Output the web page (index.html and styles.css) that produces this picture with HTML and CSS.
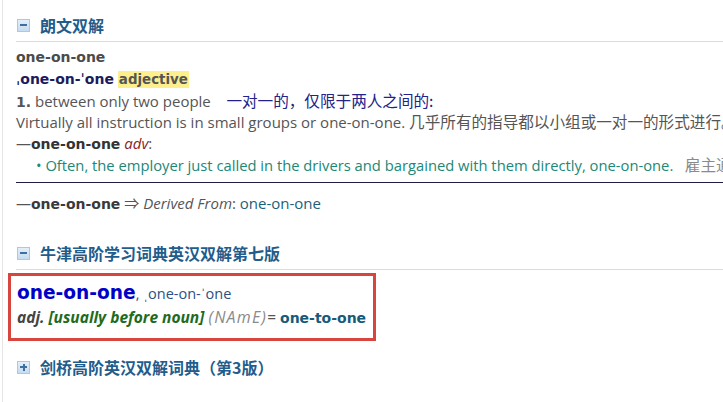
FILE: index.html
```html
<!DOCTYPE html>
<html lang="zh">
<head>
  <meta charset="UTF-8" />
  <title>one-on-one</title>
  <link rel="stylesheet" href="styles.css">
</head>
<body>
<div class="page">

  <!-- Longman -->
  <section class="dict">
    <div class="dict-head">
      <span class="toggle minus"></span>
      <h2>朗文双解</h2>
    </div>
    <div class="entry">
      <div class="hw">one-on-one</div>
      <div class="pron"><b>ˌone-on-ˈone</b> <span class="pos">adjective</span></div>
      <div class="sense"><b>1.</b> between only two people &nbsp;&nbsp; <span class="cn">一对一的，仅限于两人之间的:</span></div>
      <div class="ex">Virtually all instruction is in small groups or one-on-one. <span class="zh">几乎所有的指导都以小组或一对一的形式进行。</span></div>
      <div class="run">—<b>one-on-one</b> <i class="adv">adv</i>:</div>
      <div class="run-ex">• Often, the employer just called in the drivers and bargained with them directly, one-on-one. &nbsp;&nbsp;<span class="zh cn-gray">雇主通常直接把司机们叫来</span></div>
    </div>
    <div class="derived">—<b>one-on-one</b> <span class="arrow">⇒</span> <i>Derived From</i>: <span class="link">one-on-one</span></div>
  </section>

  <!-- Oxford -->
  <section class="dict">
    <div class="dict-head">
      <span class="toggle minus"></span>
      <h2>牛津高阶学习词典英汉双解第七版</h2>
    </div>
    <div class="oxford">
      <div class="ox-top"><b class="ox-hw">one-on-one</b><span class="ox-pron">, ˌone-on-ˈone</span></div>
      <div class="ox-line"><b class="ox-pos">adj.</b> <b class="ox-gram">[usually before noun]</b> <i class="ox-var">(NAmE)</i>= <b class="ox-xr">one-to-one</b></div>
    </div>
  </section>

  <!-- Cambridge -->
  <section class="dict closed">
    <div class="dict-head">
      <span class="toggle plus"></span>
      <h2>剑桥高阶英汉双解词典（第3版）</h2>
    </div>
  </section>

</div>
</body>
</html>
```

FILE: styles.css
```css
body {
  margin: 0;
  background: #ffffff;
  font-family: "Open Sans", "Noto Sans CJK SC", sans-serif;
  font-size: 15px;
  color: #555555;
  overflow: hidden;
}

.page {
  margin-left: 2px;
  border-left: 1px solid #e6e6e6;
  padding: 9px 0 0 13px;
  min-height: 402px;
  white-space: nowrap;
  overflow: hidden;
}

/* section header */
.dict-head {
  display: flex;
  align-items: center;
  height: 32px;
  border-bottom: 1px solid #dcdcdc;
}

.dict.closed .dict-head {
  border-bottom: none;
}

.dict + .dict {
  margin-top: 23px;
}

.dict + .dict.closed {
  margin-top: 10px;
}

.dict-head h2 {
  margin: 0 0 0 10px;
  font-family: "Noto Sans CJK SC", sans-serif;
  font-size: 16px;
  font-weight: bold;
  color: #1f5d8c;
}

.toggle {
  position: relative;
  width: 11px;
  height: 11px;
  margin-left: 1px;
  border: 1px solid #a9c9e6;
  background: linear-gradient(#e3effa, #c6dcf1);
}

.toggle::before {
  content: "";
  position: absolute;
  left: 2px;
  top: 4px;
  width: 7px;
  height: 2px;
  background: #3f6f9d;
}

.toggle.plus::after {
  content: "";
  position: absolute;
  left: 4.5px;
  top: 2px;
  width: 2px;
  height: 7px;
  background: #3f6f9d;
}

/* Longman entry */
.entry {
  padding: 5px 0 7px;
  line-height: 21.4px;
  border-bottom: 1px solid #1d1d48;
}

/* rows mix fonts, keep each one line tall */
.entry > div {
  height: 21.4px;
}

.derived {
  height: 21px;
}

.entry b,
.derived b {
  font-family: "DejaVu Sans", sans-serif;
  font-size: 14px;
}

.hw {
  font-family: "DejaVu Sans", sans-serif;
  font-weight: bold;
  font-size: 14px;
  color: #4b4b4b;
}

.pron b {
  color: #1b1b5c;
}

.pos {
  font-family: "DejaVu Sans", sans-serif;
  font-weight: bold;
  font-size: 13.4px;
  color: #555555;
  background: #fcef8c;
  padding: 1px 1px;
}

.sense b {
  color: #555555;
}

.cn,
.zh {
  font-family: "Noto Sans CJK SC", sans-serif;
  font-size: 15.6px;
}

.cn {
  color: #22228a;
}

.ex {
  color: #555555;
}

.run b {
  color: #333333;
}

.adv {
  color: #8b1d1d;
}

.run-ex {
  padding-left: 20px;
  font-size: 14.75px;
  color: #208878;
}

.cn-gray {
  color: #8a8a8a;
}

.derived {
  padding-top: 10px;
  line-height: 21px;
}

.derived b {
  color: #3a3a3a;
}

.arrow {
  color: #555555;
}

.link {
  color: #1b5f7a;
}

/* Oxford box */
.oxford {
  margin: 3px 0 0 -8px;
  width: 356px;
  border: 3px solid #d8453f;
  padding: 5px 0 9px 6px;
}

.ox-top,
.ox-line {
  height: 24px;
  line-height: 24px;
}

.ox-hw {
  font-family: "DejaVu Sans", sans-serif;
  font-size: 18.6px;
  color: #0000c8;
}

.ox-pron {
  font-size: 14.5px;
  color: #2d4f86;
}

.ox-line {
  font-size: 15.5px;
}

.ox-pos {
  font-style: italic;
  color: #444444;
}

.ox-gram {
  font-style: italic;
  color: #1e6b1e;
}

.ox-var {
  font-size: 16px;
  letter-spacing: 1.2px;
  color: #8a8a8a;
}

.ox-xr {
  font-family: "DejaVu Sans", sans-serif;
  font-size: 14px;
  color: #175a78;
}
```
